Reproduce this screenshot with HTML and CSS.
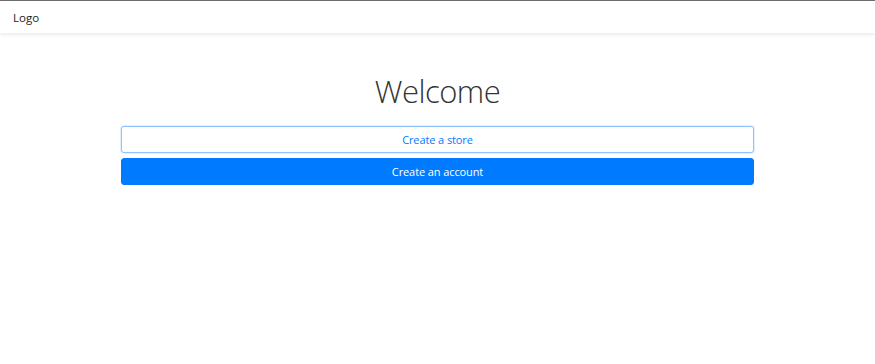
FILE: index.html
```html
<!DOCTYPE html>
<html>
<head>
<meta charset="utf-8">
<link rel="stylesheet" href="styles.css">
</head>
<body>
<header class="navbar"><span class="brand">Logo</span></header>
<main class="content">
  <h1 class="title">Welcome</h1>
  <div class="actions">
    <button class="btn btn-outline">Create a store</button>
    <button class="btn btn-primary">Create an account</button>
  </div>
</main>
</body>
</html>
```
FILE: styles.css
```css
* { box-sizing: border-box; }
html, body { margin: 0; padding: 0; background: #fff; }
body { font-family: "Open Sans", "Noto Sans", sans-serif; color: #212529; }
.navbar {
  height: 33px;
  border-top: 1px solid #6c6c6c;
  display: flex;
  align-items: center;
  padding: 0 13px;
  box-shadow: 0 2px 3px rgba(0,0,0,0.08);
}
.brand { font-size: 11.5px; color: #222; }
.content {
  display: flex;
  flex-direction: column;
  align-items: center;
  padding-top: 38px;
}
.title {
  margin: 0;
  font-size: 31px;
  font-weight: 300;
  line-height: 40px;
  color: #333;
  letter-spacing: -0.5px;
}
.actions {
  margin-top: 15px;
  width: 633px;
  display: flex;
  flex-direction: column;
  gap: 5px;
}
.btn {
  height: 27px;
  width: 100%;
  border-radius: 3px;
  font-family: inherit;
  font-size: 11px;
  letter-spacing: -0.1px;
  cursor: pointer;
  padding: 0;
}
.btn-outline { background: #fff; border: 1px solid #8ec3ff; color: #007bff; box-shadow: 0 0 0 1px #e3f0ff; }
.btn-primary { background: #007bff; border: 1px solid #007bff; color: #fff; }
```
